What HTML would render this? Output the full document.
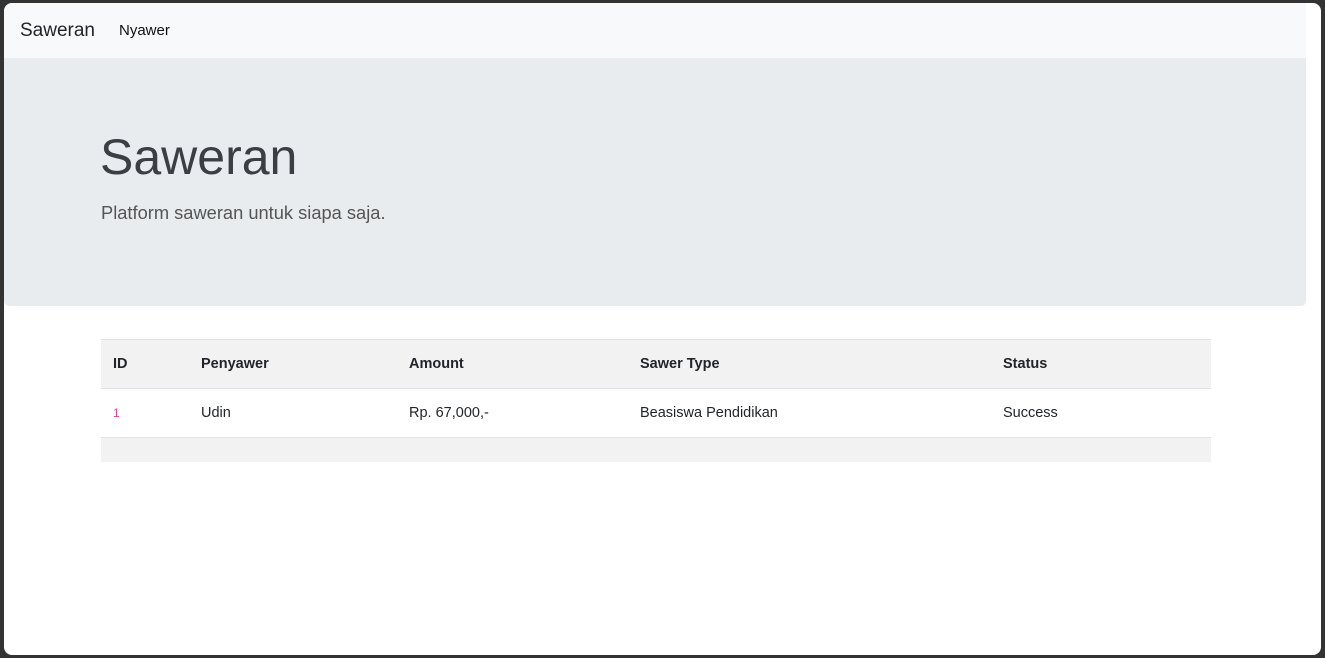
<!DOCTYPE html>
<html><head><style>
html,body{margin:0;padding:0;width:1325px;height:658px;overflow:hidden;background:#333;font-family:"Liberation Sans",sans-serif;color:#212529}
.win{position:absolute;left:4px;top:3px;width:1317px;height:652px;background:#fff;border-radius:8px;overflow:hidden}
.nav{position:absolute;left:0;top:0;width:1302px;height:55px;background:#f8f9fa}
.brand{position:absolute;left:16px;top:17px;font-size:19px;color:#212529}
.link{position:absolute;left:115px;top:19px;font-size:15px;color:#111}
.jumbo{position:absolute;left:0;top:55px;width:1302px;height:248px;background:#e9ecef;border-radius:0 0 5px 5px}
.h1{position:absolute;left:96px;top:70px;font-size:50px;font-weight:300;color:#3a3f44;letter-spacing:0px}
.lead{position:absolute;left:97px;top:144px;font-size:18.3px;font-weight:300;color:#555}
table{position:absolute;left:97px;top:336px;width:1110px;border-collapse:collapse;font-size:14.5px}
td,th{text-align:left;padding:0 12px;height:48px;border-top:1px solid #dee2e6}
thead tr{background:#f2f2f2}
th{font-weight:bold;border-bottom:1px solid #dee2e6}
.f td{background:#f2f2f2;height:24px;border-top:1px solid #dee2e6}
.id{color:#e83e8c;font-size:12px}
</style></head><body>
<div class="win">
<div class="nav"><span class="brand">Saweran</span><span class="link">Nyawer</span></div>
<div class="jumbo"><div class="h1">Saweran</div><div class="lead">Platform saweran untuk siapa saja.</div></div>
<table>
<thead><tr><th style="width:64px">ID</th><th style="width:184px">Penyawer</th><th style="width:207px">Amount</th><th style="width:339px">Sawer Type</th><th>Status</th></tr></thead>
<tbody><tr><td class="id">1</td><td>Udin</td><td>Rp. 67,000,-</td><td>Beasiswa Pendidikan</td><td>Success</td></tr>
<tr class="f"><td colspan="5"></td></tr></tbody>
</table>
</div>
</body></html>
